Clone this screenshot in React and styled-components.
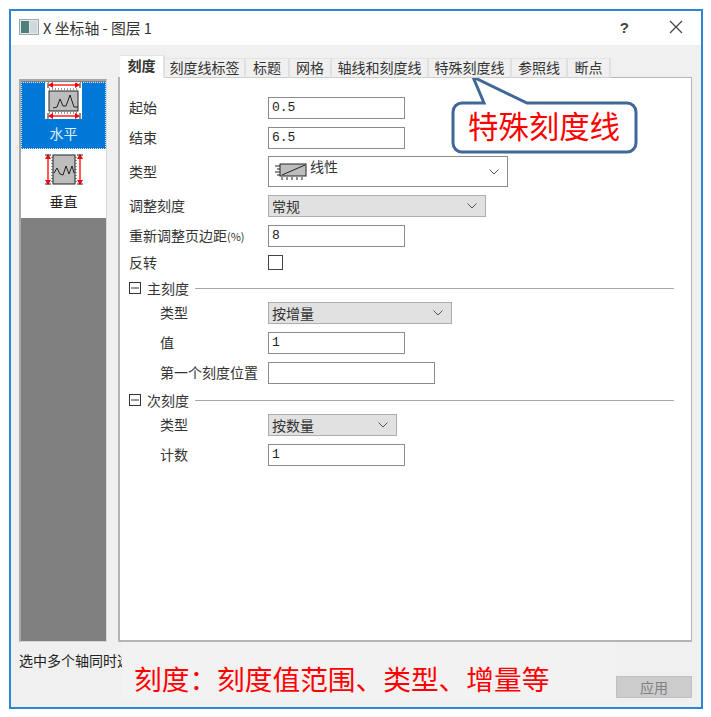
import React from 'react';
import styled, { createGlobalStyle } from 'styled-components';

const CJK = '"Noto Sans CJK SC", "Liberation Sans", sans-serif';

const Global = createGlobalStyle`
	html, body { margin: 0; background: #fff; }
	* { box-sizing: border-box; }
`;

const Page = styled.div`
	padding: 9px;
	width: 711px;
	height: 717px;
	font-family: ${CJK};
	font-size: 14px;
	color: #222;
`;

const Dialog = styled.div`
	position: relative;
	width: 694px;
	height: 700px;
	border: 2px solid #2b87d3;
	background: #f0f0f0;
	display: flex;
	flex-direction: column;
`;

const TitleBar = styled.div`
	height: 34px;
	background: #fff;
	display: flex;
	align-items: center;
	padding: 0 18px 2px 8px;
`;

const TitleText = styled.span`
	margin-left: 4px;
	font-size: 14.8px;
	color: #333;
	flex: 1;
`;

const HelpMark = styled.span`
	font-family: "Liberation Sans", sans-serif;
	font-weight: bold;
	font-size: 15px;
	color: #444;
	margin-right: 40px;
`;

const Body = styled.div`
	flex: 1;
	display: flex;
	min-height: 0;
	padding: 10px 9px 0 8px;
	gap: 11px;
`;

const Sidebar = styled.div`
	width: 88px;
	height: 563px;
	margin-top: 24px;
	background: #808080;
	border: 2px solid #a8a8a8;
	border-right: 1px solid #d8d8d8;
	border-bottom: 1px solid #d8d8d8;
	padding-top: 1px;
`;

const SideItem = styled.div`
	height: ${(p) => (p.$active ? 67 : 69)}px;
	display: flex;
	flex-direction: column;
	align-items: center;
	padding-top: ${(p) => (p.$active ? 0 : 5)}px;
	background: ${(p) => (p.$active ? '#0078d7' : '#fff')};
	color: ${(p) => (p.$active ? '#dfeefb' : '#222')};
	outline: ${(p) => (p.$active ? '1px dotted #cfe4f7' : 'none')};
	outline-offset: -1px;
	overflow: hidden;
`;

const SideLabel = styled.span`
	font-size: 14px;
	line-height: 20px;
	margin-top: ${(p) => p.$top}px;
`;

const Main = styled.div`
	flex: 1;
	display: flex;
	flex-direction: column;
	min-width: 0;
	height: 587px;
`;

const TabStrip = styled.div`
	display: flex;
	height: 23px;
	padding-left: 2px;
	align-items: flex-end;
	position: relative;
	z-index: 1;
	margin-bottom: -1px;
`;

const Tab = styled.div`
	width: ${(p) => p.$w}px;
	height: ${(p) => (p.$active ? 23 : 20)}px;
	display: flex;
	align-items: center;
	justify-content: center;
	padding-bottom: ${(p) => (p.$active ? 4 : 3)}px;
	font-size: 14px;
	white-space: nowrap;
	font-weight: ${(p) => (p.$active ? 'bold' : 'normal')};
	background: ${(p) => (p.$active ? '#fff' : '#f0f0f0')};
	border-top: 1px solid #e4e4e4;
	border-right: 2px solid #e0e0e0;
	border-bottom: ${(p) => (p.$active ? 'none' : '1px solid #cfcfcf')};
	color: #333;
`;

const Panel = styled.div`
	flex: 1;
	background: #fff;
	border: 2px solid #b4b4b4;
	border-top-width: 1px;
	border-right-width: 1px;
	padding: 19px 17px 0 9px;
	display: flex;
	flex-direction: column;
	gap: 8px;
`;

const Row = styled.div`
	display: flex;
	align-items: center;
	padding-left: ${(p) => (p.$sub ? 31 : 0)}px;
	margin-top: ${(p) => p.$top || 0}px;
`;

const Label = styled.span`
	width: ${(p) => (p.$sub ? 108 : 139)}px;
	font-size: 14px;
	line-height: 16px;
	margin-top: -2px;
	color: #333;
	white-space: nowrap;
`;

const Percent = styled.span`
	font-size: 11px;
`;

const Field = styled.div`
	width: ${(p) => p.$w || 137}px;
	height: 22px;
	background: #fff;
	border: 1px solid #8c8c8c;
	padding-left: 3px;
	font-family: "Liberation Mono", monospace;
	font-size: 13px;
	line-height: 20px;
	color: #222;
`;

const Drop = styled.div`
	width: ${(p) => p.$w}px;
	height: 22px;
	background: #e1e1e1;
	border: 1px solid #adadad;
	display: flex;
	align-items: center;
	justify-content: space-between;
	padding: 0 8px 1px 3px;
	font-size: 14px;
	color: #333;
`;

const TypeBox = styled.div`
	width: 240px;
	height: 31px;
	background: #fff;
	border: 1px solid #8c8c8c;
	display: flex;
	align-items: flex-start;
	padding: 0 8px 0 5px;
	font-size: 14px;
	color: #333;
`;

const TypeText = styled.span`
	flex: 1;
	margin-left: 3px;
	line-height: 18px;
`;

const TypeChevron = styled.span`
	align-self: center;
	display: flex;
`;

const Check = styled.div`
	width: 15px;
	height: 15px;
	border: 1px solid #444;
	background: #fff;
`;

const GroupHead = styled.div`
	height: 16px;
	margin-top: ${(p) => p.$top}px;
	margin-bottom: -2px;
	display: flex;
	align-items: center;
	gap: 6px;
`;

const GroupTitle = styled.span`
	font-size: 14px;
	color: #333;
`;

const GroupLine = styled.div`
	flex: 1;
	height: 1px;
	background: #a8a8a8;
`;

const Footer = styled.div`
	height: 65px;
	position: relative;
	display: flex;
	justify-content: space-between;
	padding: 8px 9px 9px 8px;
`;

const Status = styled.span`
	font-size: 14px;
	line-height: 20px;
	color: #222;
`;

const ApplyButton = styled.button`
	align-self: flex-end;
	width: 76px;
	height: 22px;
	background: #cccccc;
	border: 1px solid #bfbfbf;
	padding: 0;
	font-family: ${CJK};
	font-size: 14px;
	color: #808080;
`;

// pasted-on note over the status line
const Note = styled.div`
	position: absolute;
	left: 111px;
	top: 0;
	width: 494px;
	height: 56px;
	background: #f2f2f2;
	padding: 18px 0 0 12px;
	font-size: 27.7px;
	line-height: 36px;
	color: #f00;
	white-space: nowrap;
`;

const Callout = styled.div`
	position: absolute;
	left: 439px;
	top: 65px;
	width: 192px;
	height: 80px;
`;

const CalloutText = styled.span`
	position: absolute;
	left: 18px;
	top: 26px;
	font-size: 30.4px;
	line-height: 46px;
	color: #f00;
	white-space: nowrap;
`;

const CalloutShape = styled.svg`
	position: absolute;
	left: 0;
	top: 0;
	display: block;
`;

const Svg = styled.svg`
	display: block;
	flex: none;
`;

const LinearGlyph = styled(Svg)`
	margin-top: 3px;
`;

const AppIcon = () => (
	<Svg width="20" height="16" viewBox="0 0 20 16">
		<rect x="0.5" y="0.5" width="19" height="15" fill="#e4e8e8" stroke="#9aa" />
		<rect x="2" y="2" width="8" height="12" fill="#4f7f78" />
		<rect x="11" y="2" width="7" height="12" fill="#cfd8dc" />
	</Svg>
);

const CloseIcon = () => (
	<Svg width="14" height="14" viewBox="0 0 14 14">
		<path d="M1 1L13 13M13 1L1 13" stroke="#444" strokeWidth="1.2" />
	</Svg>
);

const Chevron = () => (
	<Svg width="10" height="6" viewBox="0 0 10 6">
		<path d="M0.5 0.5L5 5L9.5 0.5" fill="none" stroke="#555" strokeWidth="1" />
	</Svg>
);

const Arrow = ({ y }) => (
	<g stroke="#f00" fill="#f00">
		<path d={`M5 ${y}H33`} strokeWidth="1.3" />
		<path d={`M3 ${y}l5 -3v6zM35 ${y}l-5 -3v6z`} stroke="none" />
		<path d={`M3 ${y - 3}v6M35 ${y - 3}v6`} stroke="#222" strokeWidth="1" />
	</g>
);

const HorizontalIcon = () => (
	<Svg width="37" height="37" viewBox="0 0 37 37">
		<rect width="37" height="37" fill="#fff" />
		<Arrow y="3" />
		<path d="M4 7H33" stroke="#333" strokeDasharray="1 2" />
		<rect x="4" y="9" width="29" height="20" fill="#bdbdbd" stroke="#222" />
		<path d="M8 26L12 25L15 17L18 24L21 24L25 13L29 25L33 25" fill="none" stroke="#222" />
		<path d="M4 31H33" stroke="#333" strokeDasharray="1 2" />
		<Arrow y="34" />
	</Svg>
);

const VerticalIcon = () => (
	<Svg width="38" height="32" viewBox="0 0 38 32">
		<rect x="8" y="1" width="22" height="29" fill="#bdbdbd" stroke="#222" />
		<path d="M9 19L12 14L15 20L18 21L21 12L24 20L27 12L29 19" fill="none" stroke="#222" />
		<path d="M3 2V29M35 2V29" stroke="#f00" strokeWidth="1.3" />
		<path d="M3 0l-3 5h6zM3 31l-3 -5h6zM35 0l-3 5h6zM35 31l-3 -5h6z" fill="#f00" />
		<path d="M0 1H6M0 30H6M32 1H38M32 30H38" stroke="#222" />
		<path d="M7 3V29M31 3V29" stroke="#333" strokeDasharray="1 2" />
	</Svg>
);

const LinearIcon = () => (
	<LinearGlyph width="33" height="22" viewBox="0 0 33 22">
		<rect x="6" y="4" width="26" height="12" fill="#bdbdbd" stroke="#222" />
		<path d="M8 15L31 5" stroke="#222" />
		<path d="M1 6H6M3 9H6M1 12H6M3 15H6" stroke="#222" />
		<path d="M8 17v3M13 17v3M18 17v3M23 17v3M28 17v3" stroke="#222" />
	</LinearGlyph>
);

const TreeBox = () => (
	<Svg width="12" height="12" viewBox="0 0 12 12">
		<rect x="0.5" y="0.5" width="11" height="11" fill="#fff" stroke="#333" />
		<path d="M2 6H10" stroke="#333" />
	</Svg>
);

const TABS = [
	{ t: '刻度', w: 45, active: true },
	{ t: '刻度线标签', w: 81 },
	{ t: '标题', w: 44 },
	{ t: '网格', w: 42 },
	{ t: '轴线和刻度线', w: 97 },
	{ t: '特殊刻度线', w: 83 },
	{ t: '参照线', w: 56 },
	{ t: '断点', w: 43 },
];

export default function App() {
	return (
		<Page>
			<Global />
			<Dialog>
				<TitleBar>
					<AppIcon />
					<TitleText>X 坐标轴 - 图层 1</TitleText>
					<HelpMark>?</HelpMark>
					<CloseIcon />
				</TitleBar>
				<Body>
					<Sidebar>
						<SideItem $active>
							<HorizontalIcon />
							<SideLabel $top={4}>水平</SideLabel>
						</SideItem>
						<SideItem>
							<VerticalIcon />
							<SideLabel $top={5}>垂直</SideLabel>
						</SideItem>
					</Sidebar>
					<Main>
						<TabStrip>
							{TABS.map((el) => (
								<Tab key={el.t} $w={el.w} $active={el.active}>
									{el.t}
								</Tab>
							))}
						</TabStrip>
						<Panel>
							<Row>
								<Label>起始</Label>
								<Field>0.5</Field>
							</Row>
							<Row>
								<Label>结束</Label>
								<Field>6.5</Field>
							</Row>
							<Row $top={-1}>
								<Label>类型</Label>
								<TypeBox>
									<LinearIcon />
									<TypeText>线性</TypeText>
									<TypeChevron>
										<Chevron />
									</TypeChevron>
								</TypeBox>
							</Row>
							<Row>
								<Label>调整刻度</Label>
								<Drop $w={218}>
									常规
									<Chevron />
								</Drop>
							</Row>
							<Row>
								<Label>
									重新调整页边距<Percent>(%)</Percent>
								</Label>
								<Field>8</Field>
							</Row>
							<Row>
								<Label>反转</Label>
								<Check />
							</Row>
							<GroupHead $top={2}>
								<TreeBox />
								<GroupTitle>主刻度</GroupTitle>
								<GroupLine />
							</GroupHead>
							<Row $sub>
								<Label $sub>类型</Label>
								<Drop $w={184}>
									按增量
									<Chevron />
								</Drop>
							</Row>
							<Row $sub>
								<Label $sub>值</Label>
								<Field>1</Field>
							</Row>
							<Row $sub>
								<Label $sub>第一个刻度位置</Label>
								<Field $w={167} />
							</Row>
							<GroupHead $top={0}>
								<TreeBox />
								<GroupTitle>次刻度</GroupTitle>
								<GroupLine />
							</GroupHead>
							<Row $sub>
								<Label $sub>类型</Label>
								<Drop $w={129}>
									按数量
									<Chevron />
								</Drop>
							</Row>
							<Row $sub>
								<Label $sub>计数</Label>
								<Field>1</Field>
							</Row>
						</Panel>
					</Main>
				</Body>
				<Footer>
					<Status>选中多个轴同时选择</Status>
					<ApplyButton disabled>应用</ApplyButton>
					<Note>刻度：刻度值范围、类型、增量等</Note>
				</Footer>
				<Callout>
					<CalloutShape width="192" height="80" viewBox="0 0 192 80">
						<path
							d="M23 1L34 27H12A9 9 0 0 0 3 36V67A9 9 0 0 0 12 76H177A9 9 0 0 0 186 67V36A9 9 0 0 0 177 27H77Z"
							fill="#fff"
							stroke="#3f6797"
							strokeWidth="3"
						/>
					</CalloutShape>
					<CalloutText>特殊刻度线</CalloutText>
				</Callout>
			</Dialog>
		</Page>
	);
}
